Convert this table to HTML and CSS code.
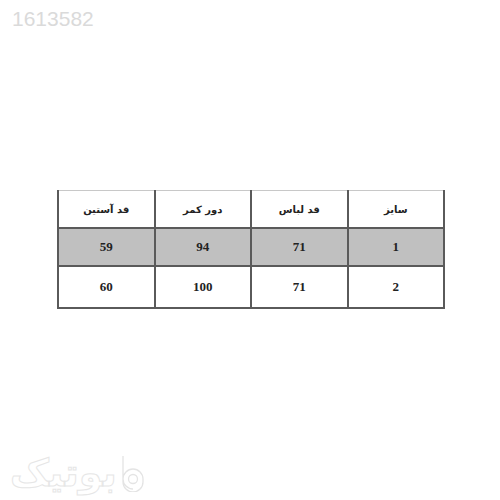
FILE: index.html
```html
<!DOCTYPE html>
<html lang="fa">
<head>
<meta charset="utf-8">
<link rel="stylesheet" href="styles.css">
</head>
<body>
<div class="page">
  <div class="code">1613582</div>
  <div class="table-wrap">
    <table class="sizes" dir="rtl">
      <tr class="head">
        <td>سایز</td>
        <td>قد لباس</td>
        <td>دور کمر</td>
        <td>قد آستین</td>
      </tr>
      <tr class="gray">
        <td>1</td>
        <td>71</td>
        <td>94</td>
        <td>59</td>
      </tr>
      <tr>
        <td>2</td>
        <td>71</td>
        <td>100</td>
        <td>60</td>
      </tr>
    </table>
  </div>
  <div class="logo">
    <span class="logo-text">بوتیک</span>
    <svg class="logo-mark" width="26" height="38" viewBox="0 0 26 38">
      <path d="M3 2 V28 a10 10 0 0 0 20 0 V25 a10 10 0 1 0 -10 10" fill="none" stroke="#e4e4e4" stroke-width="1.3"/>
      <circle cx="13" cy="25" r="4.5" fill="none" stroke="#e4e4e4" stroke-width="1.3"/>
    </svg>
  </div>
</div>
</body>
</html>
```
FILE: styles.css
```css
html, body {
  margin: 0;
  padding: 0;
  background: #ffffff;
}
.page {
  position: relative;
  width: 500px;
  height: 500px;
  overflow: hidden;
}
.code {
  position: absolute;
  left: 12px;
  top: 7px;
  font-family: "Liberation Sans", Arial, sans-serif;
  font-size: 21px;
  color: #dadada;
}
.table-wrap {
  padding-top: 190px;
  padding-left: 57px;
}
.sizes {
  border-collapse: collapse;
  width: 388px;
  font-family: "Liberation Serif", "Times New Roman", serif;
  font-weight: bold;
  color: #222;
}
.sizes td {
  border: 2px solid #5a5a5a;
  text-align: center;
  padding: 0;
  width: 25%;
}
.sizes tr:first-child td {
  border-top: 1px solid #c8c8c8;
}
.head td {
  height: 35px;
  font-family: "DejaVu Sans", "Noto Sans", sans-serif;
  font-size: 10px;
  padding-top: 1px;
}
.gray td {
  background: #c0c0c0;
  height: 36px;
  font-size: 13px;
}
.sizes tr:last-child td {
  height: 40px;
  font-size: 13px;
}
.logo {
  position: absolute;
  left: 10px;
  top: 452px;
  display: flex;
  align-items: flex-end;
  gap: 3px;
}
.logo-text {
  font-family: "DejaVu Sans", sans-serif;
  font-size: 38px;
  font-weight: bold;
  color: transparent;
  -webkit-text-stroke: 1px #e6e6e6;
  line-height: 42px;
}
.logo-mark {
  display: block;
  margin-bottom: 2px;
}
```
